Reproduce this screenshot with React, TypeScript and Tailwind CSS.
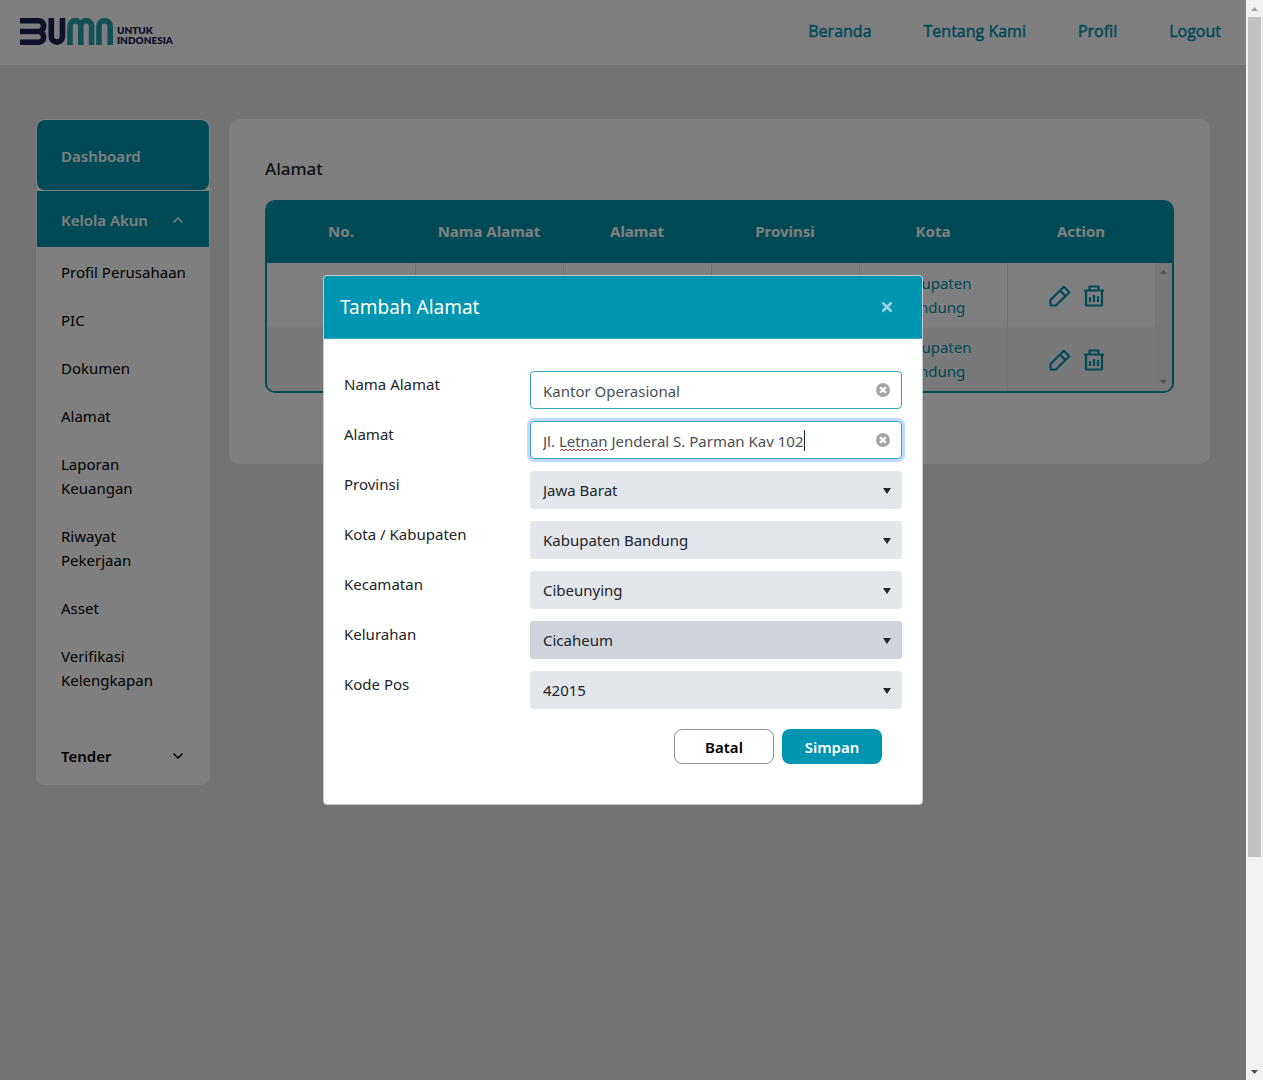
import React from "react";

const sideItems = [
  "Profil Perusahaan",
  "PIC",
  "Dokumen",
  "Alamat",
  "Laporan Keuangan",
  "Riwayat Pekerjaan",
  "Asset",
  "Verifikasi Kelengkapan",
];

const columns = ["No.", "Nama Alamat", "Alamat", "Provinsi", "Kota", "Action"];

const selects = [
  { id: "provinsi", label: "Provinsi", value: "Jawa Barat" },
  { id: "kota", label: "Kota / Kabupaten", value: "Kabupaten Bandung" },
  { id: "kecamatan", label: "Kecamatan", value: "Cibeunying" },
  { id: "kelurahan", label: "Kelurahan", value: "Cicaheum", active: true },
  { id: "kodepos", label: "Kode Pos", value: "42015" },
];

function Logo() {
  return (
    <a href="#" aria-label="BUMN" className="flex items-end gap-1 text-[#1c2350]">
      <svg width="93" height="27" viewBox="0 0 93 27" fill="none" strokeWidth="5.6">
        <g stroke="#1c2350">
          <path d="M0 2.800H19A4.500 4.500 0 0 1 23.500 7.300V8.500C23.500 11 22 12.500 20 13.500C22 14.500 23.500 16 23.500 18.500V19.700A4.500 4.500 0 0 1 19 24.200H0M0 13.500H21" />
          <path d="M31.300 0V18.500a5.600 5.600 0 0 0 11.200 0V0" />
        </g>
        <g stroke="#23a0a8">
          <path d="M50 27V8a5.400 5.400 0 0 1 10.800 0V27M60.800 8a5.400 5.400 0 0 1 10.800 0V27" />
          <path d="M79 27V8.300a5.600 5.600 0 0 1 11.200 0V27" />
        </g>
      </svg>
      <span className="flex flex-col font-['Lato',sans-serif] text-[10px] leading-[10px] font-extrabold">
        <span>UNTUK</span>
        <span>INDONESIA</span>
      </span>
    </a>
  );
}

function Pencil() {
  return (
    <svg width="22" height="22" viewBox="0 0 22 22" fill="none" stroke="currentColor" strokeWidth="2.2" strokeLinejoin="round">
      <path d="M1.500 20.500V15L14.800 1.700l5.500 5.500L7 20.500ZM11 5.500l5.500 5.500" />
    </svg>
  );
}

function Trash() {
  return (
    <svg width="22" height="22" viewBox="0 0 22 22" fill="none" stroke="currentColor" strokeWidth="2.2" strokeLinejoin="round">
      <path d="M1 5.500H21M3 5.500V20.500H19V5.500M6.500 5.500V1.500H15.500V5.500M7 12v5M11 10v7M15 11v6" />
    </svg>
  );
}

function Chevron({ up = false }: { up?: boolean }) {
  return (
    <svg width="12" height="8" viewBox="0 0 12 8" fill="none" stroke="currentColor" strokeWidth="1.500">
      <path d={up ? "M1.500 6.500L6 2l4.500 4.500" : "M1.500 1.500L6 6l4.500-4.500"} />
    </svg>
  );
}

function Arrow({ up = false }: { up?: boolean }) {
  return (
    <svg width="7" height="4" viewBox="0 0 7 4" fill="currentColor">
      <path d={up ? "M0 4L3.500 0L7 4Z" : "M0 0L3.500 4L7 0Z"} />
    </svg>
  );
}

function ClearButton({ label }: { label: string }) {
  return (
    <button type="button" aria-label={label} className="absolute top-3 right-3 text-[#a3a5a8]">
      <svg width="14" height="14" viewBox="0 0 14 14" className="block">
        <circle cx="7" cy="7" r="7" fill="currentColor" />
        <path d="M4.200 4.200l5.600 5.600M9.800 4.200l-5.600 5.600" stroke="#fff" strokeWidth="2.200" />
      </svg>
    </button>
  );
}

function Header() {
  return (
    <header className="flex h-[65px] items-center justify-between bg-white pr-[25px] pb-[3px] pl-5">
      <Logo />
      <nav className="flex gap-[52px] font-['Open_Sans',sans-serif] text-base text-[#0095ae] [-webkit-text-stroke:0.03em_#0095ae]">
        <a href="#">Beranda</a>
        <a href="#">Tentang Kami</a>
        <a href="#">Profil</a>
        <a href="#">Logout</a>
      </nav>
    </header>
  );
}

function Sidebar() {
  return (
    <aside className="w-[174px] shrink-0 overflow-hidden rounded-lg border border-white bg-white text-[15px] leading-6 text-black">
      <a href="#" className="flex h-[70px] items-center rounded-lg bg-[#0095ae] px-6 pt-[2px] font-semibold text-white">
        Dashboard
      </a>
      <button type="button" className="mt-px flex h-14 w-full items-center justify-between bg-[#0095ae] pt-px pr-[25px] pl-6 font-semibold text-white">
        Kelola Akun
        <Chevron up />
      </button>
      <ul className="pt-px">
        {sideItems.map((item) => (
          <li key={item}>
            <a href="#" className="block py-3 pr-5 pl-6">{item}</a>
          </li>
        ))}
      </ul>
      <button type="button" className="mt-6 flex h-14 w-full items-center justify-between pr-[25px] pl-6 font-semibold">
        Tender
        <Chevron />
      </button>
    </aside>
  );
}

function AddressTable() {
  return (
    <div className="flex overflow-hidden rounded-[10px] border-2 border-[#0095ae] bg-white">
      <div className="min-w-0 flex-1">
        <table className="w-full table-fixed border-collapse text-[15px] leading-6 text-[#0095ae]">
          <thead className="bg-[#0095ae] text-white">
            <tr className="h-[61px]">
              {columns.map((c) => (
                <th key={c} className="pb-1 font-bold">{c}</th>
              ))}
            </tr>
          </thead>
          <tbody>
            {[0, 1].map((row) => (
              <tr key={row} className="h-16 even:bg-[#f2f2f2]">
                <td className="border-r border-[#dee2e6]" />
                <td className="border-r border-[#dee2e6]" />
                <td className="border-r border-[#dee2e6]" />
                <td className="border-r border-[#dee2e6]" />
                <td className="border-r border-[#dee2e6] px-3 text-center">Kabupaten Bandung</td>
                <td>
                  <div className="flex justify-center gap-3 pt-px pr-2">
                    <button type="button" aria-label="Edit"><Pencil /></button>
                    <button type="button" aria-label="Hapus"><Trash /></button>
                  </div>
                </td>
              </tr>
            ))}
          </tbody>
        </table>
      </div>
      <div className="flex w-[17px] flex-col">
        <div className="h-[61px] bg-[#0095ae]" />
        <div className="flex flex-1 flex-col items-center justify-between bg-[#f0f0f0] py-[7px] text-[#a3a3a3]">
          <Arrow up />
          <Arrow />
        </div>
      </div>
    </div>
  );
}

function Modal() {
  const input =
    "block h-[38px] w-full rounded border border-[#35a9b9] bg-white pt-[2px] pr-9 pl-3 text-[15px] text-[#495057] outline-none";
  return (
    <section role="dialog" aria-labelledby="modal-title" className="w-[600px] overflow-hidden rounded border border-[#c4c9cc] bg-white">
      <div className="flex h-[63px] items-center justify-between border-b border-[#35a9b9] bg-[#0095b0] pr-[29px] pl-4 text-white">
        <h2 id="modal-title" className="pt-px text-[19px]">Tambah Alamat</h2>
        <button type="button" aria-label="Tutup" className="text-white/60">
          <svg width="12" height="12" viewBox="0 0 12 12" stroke="currentColor" strokeWidth="2.600">
            <path d="M1.500 1.500l9 9M10.500 1.500l-9 9" />
          </svg>
        </button>
      </div>
      <form className="flex flex-col gap-3 pt-8 pr-5 pb-10 pl-5 text-[15px] text-[#212529]">
        <div className="grid grid-cols-3">
          <label htmlFor="nama" className="pt-px leading-6">Nama Alamat</label>
          <div className="relative col-span-2">
            <input id="nama" type="text" defaultValue="Kantor Operasional" className={input} />
            <ClearButton label="Hapus nama alamat" />
          </div>
        </div>
        <div className="grid grid-cols-3">
          <label htmlFor="alamat" className="pt-px leading-6">Alamat</label>
          <div className="relative col-span-2 rounded ring-3 ring-[#bfd9ff]">
            <input id="alamat" type="text" defaultValue="Jl. Letnan Jenderal S. Parman Kav 102" className={input} />
            <svg width="48" height="4" viewBox="0 0 48 4" className="absolute top-[27px] left-[30px]" fill="none" stroke="#f03030">
              <path d="M0 3l2-2 2 2 2-2 2 2 2-2 2 2 2-2 2 2 2-2 2 2 2-2 2 2 2-2 2 2 2-2 2 2 2-2 2 2 2-2 2 2 2-2 2 2 2-2 2 2" />
            </svg>
            <span className="absolute top-[9px] left-[274px] h-[21px] w-px bg-[#212529]" />
            <ClearButton label="Hapus alamat" />
          </div>
        </div>
        {selects.map((s) => (
          <div key={s.id} className="grid grid-cols-3">
            <label htmlFor={s.id} className="pt-px leading-6">{s.label}</label>
            <div className="relative col-span-2">
              <select
                id={s.id}
                className={
                  s.active
                    ? "block h-[38px] w-full appearance-none rounded bg-[#cfd4dc] px-[13px] pt-px text-[15px] text-[#212529]"
                    : "block h-[38px] w-full appearance-none rounded bg-[#e3e6eb] px-[13px] pt-px text-[15px] text-[#212529]"
                }
              >
                <option>{s.value}</option>
              </select>
              <svg width="8" height="6" viewBox="0 0 8 6" className="pointer-events-none absolute top-[17px] right-[11px]" fill="#212529">
                <path d="M0 0H8L4 6Z" />
              </svg>
            </div>
          </div>
        ))}
        <div className="mt-2 flex justify-end gap-2 pr-5 text-[15px] font-semibold">
          <button type="button" className="h-[35px] w-[100px] rounded-lg border border-[#909090] bg-white pt-[2px] text-black">Batal</button>
          <button type="submit" className="h-[35px] w-[100px] rounded-lg bg-[#0095b0] pt-[2px] text-white">Simpan</button>
        </div>
      </form>
    </section>
  );
}

export default function App() {
  return (
    <div className="flex h-screen font-['Noto_Sans',sans-serif]">
      <div className="relative min-w-0 flex-1 overflow-hidden bg-[#e6e6e6]">
        <Header />
        <div className="flex items-start gap-[19px] px-9 pt-[54px]">
          <Sidebar />
          <main className="min-w-0 flex-1 rounded-[10px] bg-white px-9 pt-[38px] pb-[71px]">
            <h1 className="mb-[19px] text-[17px] leading-6 font-medium text-[#212529]">Alamat</h1>
            <AddressTable />
          </main>
        </div>
        <div className="absolute inset-0 flex items-center justify-center bg-black/50">
          <Modal />
        </div>
      </div>
      <div aria-hidden="true" className="flex w-[17px] shrink-0 flex-col items-center bg-[#f1f1f1] text-[#505050]">
        <div className="flex h-[17px] items-center text-[#a3a3a3]"><Arrow up /></div>
        <div className="w-[13px] flex-[840] bg-[#c1c1c1]" />
        <div className="flex-[206]" />
        <div className="flex h-[17px] items-center"><Arrow /></div>
      </div>
    </div>
  );
}
